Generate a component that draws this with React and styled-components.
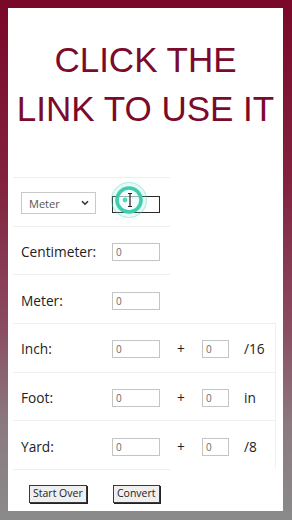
import React from "react";
import styled, { createGlobalStyle } from "styled-components";

const GlobalStyle = createGlobalStyle`
  html, body {
    margin: 0;
    padding: 0;
  }
  body {
    width: 292px;
    height: 520px;
    overflow: hidden;
    background: linear-gradient(to bottom, #7a0828 0%, #82223f 35%, #8a4a60 62%, #8b7a80 82%, #8a8a8a 100%);
    font-family: "Open Sans", "Liberation Sans", sans-serif;
  }
`;

const chevron =
  "data:image/svg+xml;utf8," +
  encodeURIComponent(
    '<svg xmlns="http://www.w3.org/2000/svg" width="8" height="6" viewBox="0 0 8 6"><path d="M1 1.2 L4 4.2 L7 1.2" fill="none" stroke="#333" stroke-width="1.6"/></svg>'
  );

const rows = [
  { label: "Centimeter:" },
  { label: "Meter:" },
  { label: "Inch:", extra: "/16" },
  { label: "Foot:", extra: "in" },
  { label: "Yard:", extra: "/8" },
];

function App() {
  return (
    <>
      <GlobalStyle />
      <StyledPage>
        <StyledCard>
          <StyledTitle>
            CLICK THE
            <br />
            LINK TO USE IT
          </StyledTitle>
          <StyledForm>
            <StyledRow>
              <StyledCell $width={91}>
                <StyledSelect defaultValue="Meter">
                  <option>Centimeter</option>
                  <option>Meter</option>
                  <option>Inch</option>
                  <option>Foot</option>
                  <option>Yard</option>
                </StyledSelect>
              </StyledCell>
              <StyledCell $width={66}>
                <StyledFocusWrap>
                  <StyledInput $focused defaultValue="" />
                  <ClickMarker />
                </StyledFocusWrap>
              </StyledCell>
            </StyledRow>
            {rows.map((row) => (
              <StyledRow key={row.label} $wide={!!row.extra}>
                <StyledCell $width={91}>
                  <StyledLabel>{row.label}</StyledLabel>
                </StyledCell>
                <StyledCell $width={66}>
                  <StyledInput defaultValue="0" />
                </StyledCell>
                {row.extra && (
                  <>
                    <StyledCell $width={32} $pad={7}>
                      <StyledLabel>+</StyledLabel>
                    </StyledCell>
                    <StyledCell $width={34} $pad={0}>
                      <StyledInput $small defaultValue="0" />
                    </StyledCell>
                    <StyledCell $width={39}>
                      <StyledLabel>{row.extra}</StyledLabel>
                    </StyledCell>
                  </>
                )}
              </StyledRow>
            ))}
            <StyledRow $last>
              <StyledCell $width={91}>
                <StyledButton $offset={8}>Start Over</StyledButton>
              </StyledCell>
              <StyledCell $width={66}>
                <StyledButton $offset={1}>Convert</StyledButton>
              </StyledCell>
            </StyledRow>
          </StyledForm>
        </StyledCard>
      </StyledPage>
    </>
  );
}

function ClickMarker() {
  return (
    <StyledMarker width="40" height="40" viewBox="0 0 40 40">
      <circle cx="20" cy="20" r="17.5" fill="rgba(120,225,205,0.18)" stroke="rgba(70,205,180,0.35)" strokeWidth="1.2" />
      <circle cx="20" cy="20" r="12" fill="rgba(255,255,255,0.55)" stroke="#3fcdb0" strokeWidth="3.6" />
      <circle cx="16" cy="20" r="2.4" fill="#57d6bb" />
      <path d="M19 13.5 h4 M21 13.5 v13 M19 26.5 h4" stroke="#222" strokeWidth="1.2" fill="none" />
    </StyledMarker>
  );
}

export default App;

const StyledPage = styled.div`
  padding: 8px 9px 9px 8px;
`;

const StyledCard = styled.div`
  width: 275px;
  height: 503px;
  background: #ffffff;
  box-sizing: border-box;
  padding: 27px 0 0 5px;
`;

const StyledTitle = styled.h1`
  margin: 0 0 44px -5px;
  font-family: "Liberation Sans", Arial, sans-serif;
  font-weight: normal;
  font-size: 35px;
  line-height: 49px;
  color: #7b0a2b;
  text-align: center;
`;

const StyledForm = styled.div`
  display: flex;
  flex-direction: column;
`;

const StyledRow = styled.div`
  display: flex;
  align-items: center;
  box-sizing: border-box;
  width: ${({ $wide }) => ($wide ? "263px" : "157px")};
  height: ${({ $last }) => ($last ? "42px" : "48.67px")};
  padding-top: 2px;
  border-top: 1px solid #efefef;
  border-right: ${({ $wide }) => ($wide ? "1px solid #f1f1f1" : "none")};
`;

const StyledCell = styled.div`
  display: flex;
  align-items: center;
  width: ${({ $width }) => $width}px;
  flex-shrink: 0;
  box-sizing: border-box;
  padding-left: ${({ $pad = 8 }) => $pad}px;
`;

const StyledLabel = styled.span`
  font-size: 13.7px;
  color: #222;
  white-space: nowrap;
`;

const StyledSelect = styled.select`
  appearance: none;
  width: 75px;
  height: 22px;
  box-sizing: border-box;
  border: 1px solid #c9c9c9;
  border-radius: 0;
  background: #fff url("${chevron}") no-repeat right 6px center;
  padding: 0 0 0 7px;
  font-family: "Open Sans", sans-serif;
  font-size: 11px;
  color: #555;
  margin-top: 1px;
  outline: none;
`;

const StyledFocusWrap = styled.div`
  position: relative;
  display: flex;
`;

const StyledInput = styled.input`
  width: ${({ $small }) => ($small ? "27px" : "48px")};
  height: ${({ $focused }) => ($focused ? "17px" : "18px")};
  box-sizing: border-box;
  border: 1px solid ${({ $focused }) => ($focused ? "#2a2a2a" : "#c4c4c4")};
  border-radius: 0;
  padding: 0 3px;
  font-family: "Open Sans", sans-serif;
  font-size: 10px;
  color: #6a6a6a;
  background: #fff;
  outline: none;
  margin-top: ${({ $focused }) => ($focused ? "4px" : "1px")};
`;

const StyledMarker = styled.svg`
  position: absolute;
  left: -3px;
  top: -12px;
  pointer-events: none;
`;

const StyledButton = styled.button`
  height: 18px;
  box-sizing: border-box;
  padding: 0 3px;
  margin-left: ${({ $offset }) => $offset}px;
  margin-top: 5px;
  background: #efefef;
  border: 1px solid #3a3a3a;
  border-radius: 0;
  box-shadow: 1px 1px 0 #222;
  font-family: "Open Sans", sans-serif;
  font-size: 10.5px;
  line-height: 15px;
  color: #222;
`;
